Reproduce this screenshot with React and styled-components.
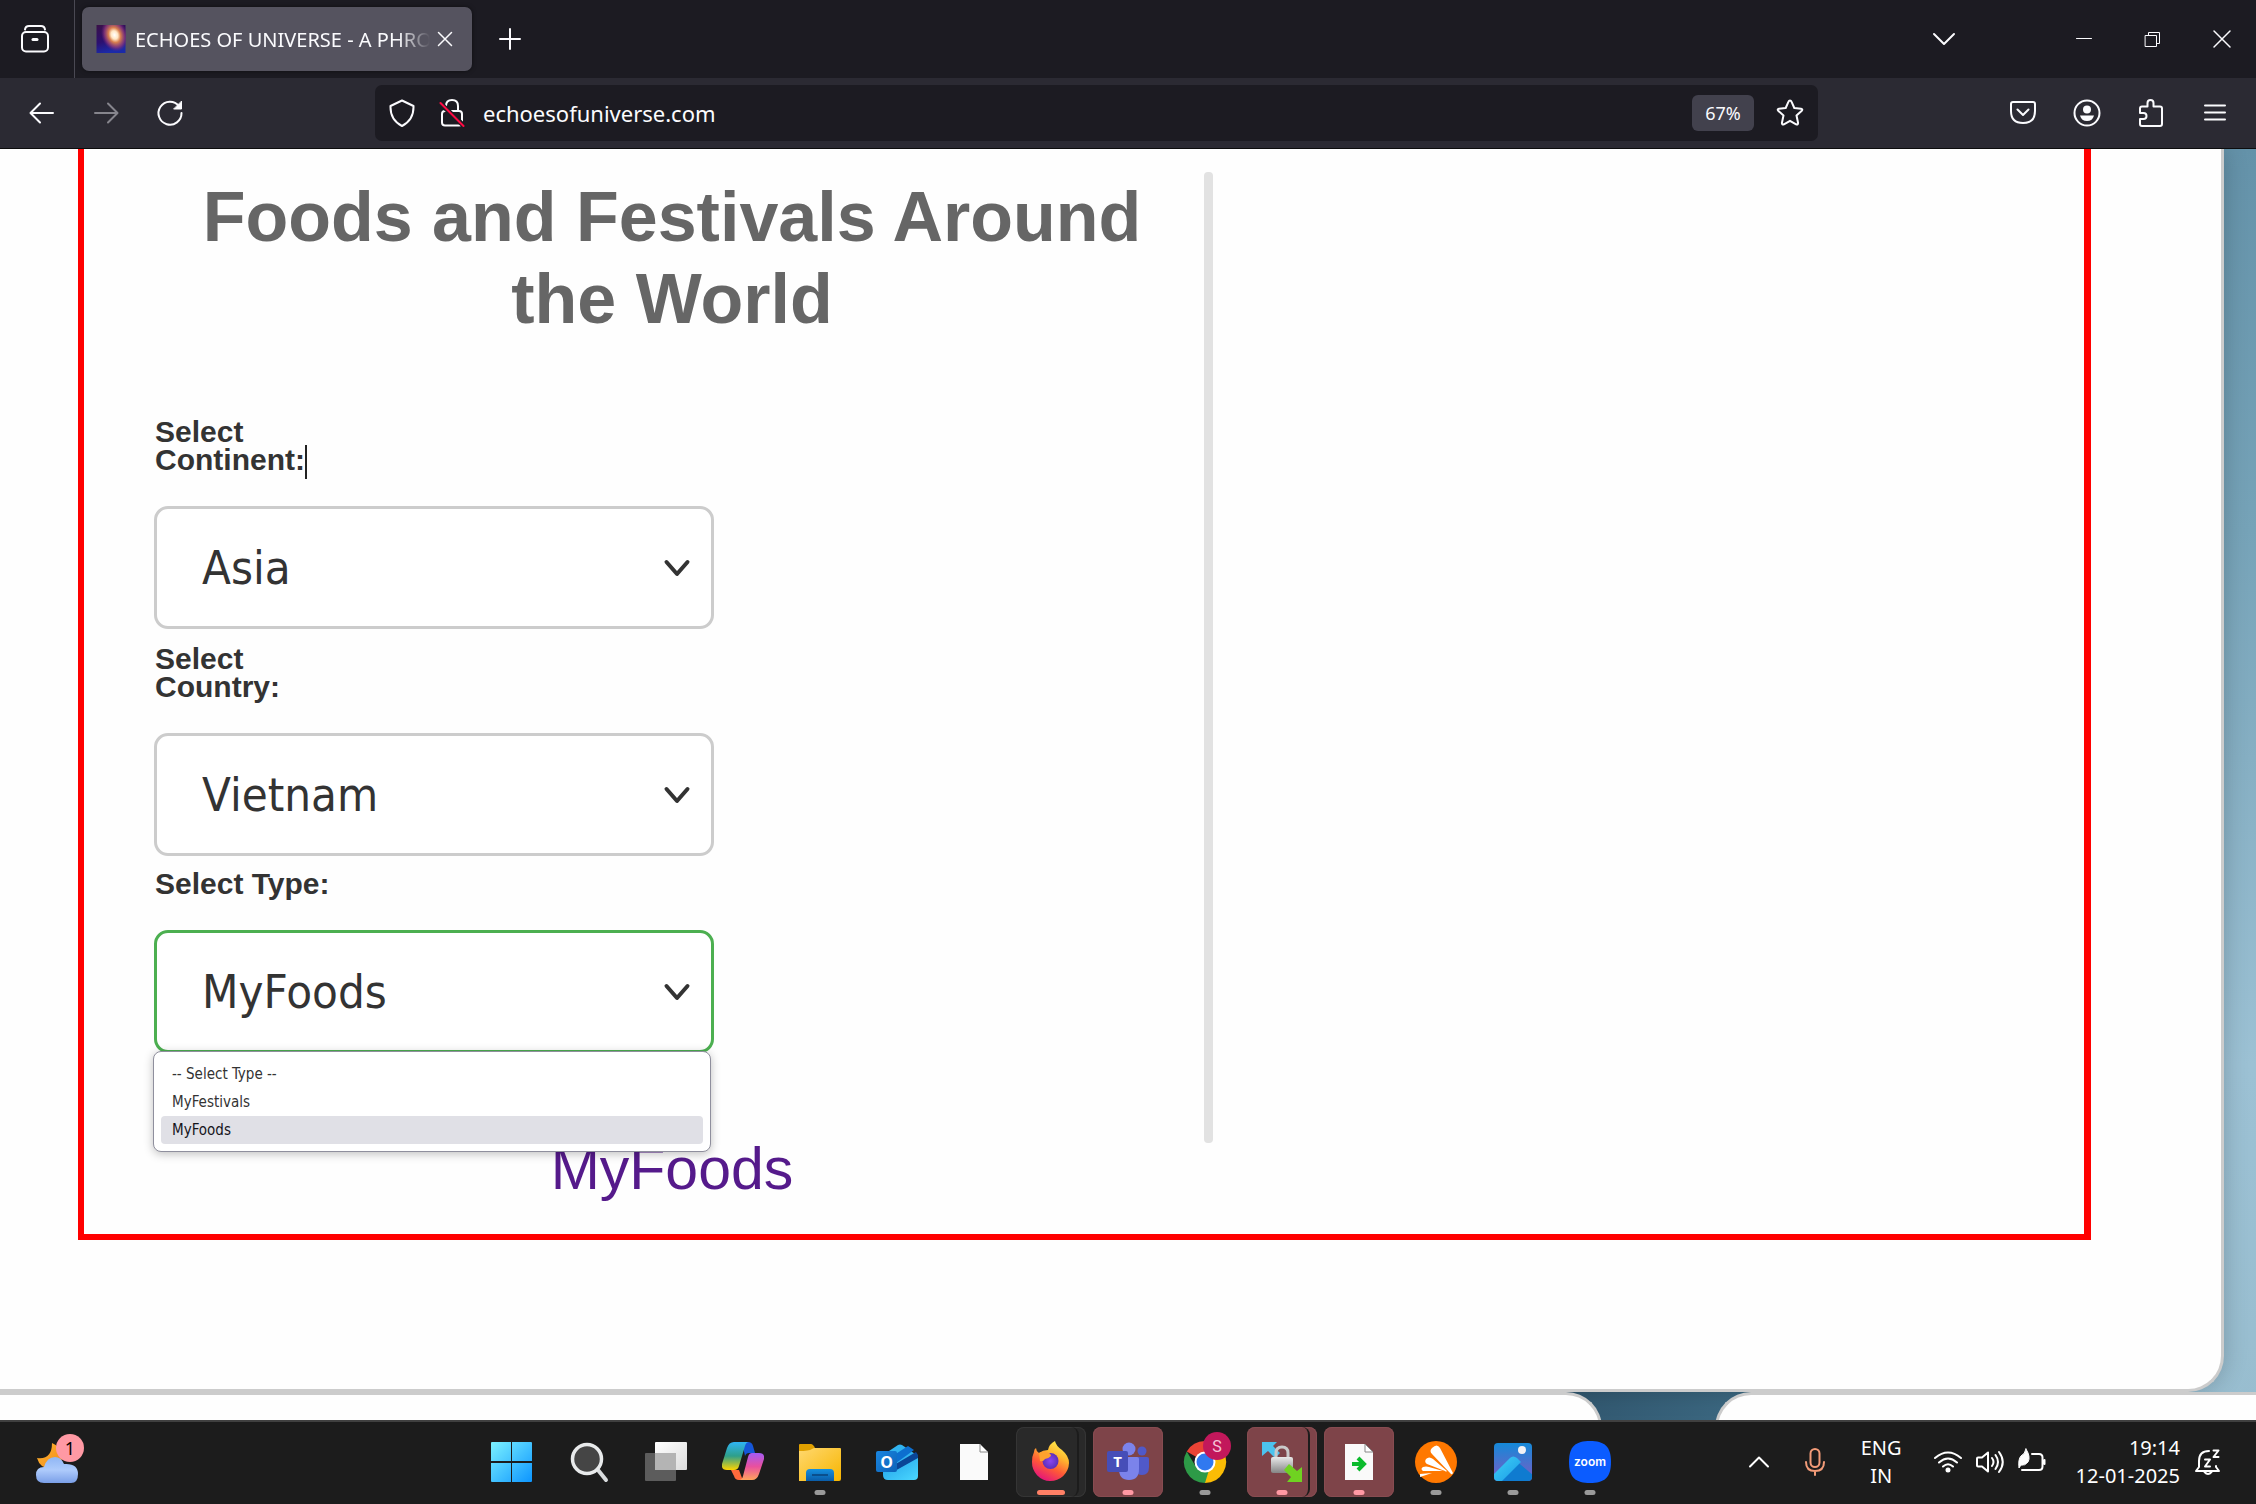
import React, { useState } from "react";
import styled, { createGlobalStyle } from "styled-components";

const uiFont = `"Noto Sans", "Open Sans", sans-serif`;
const formFont = `"DejaVu Sans Condensed", "DejaVu Sans", sans-serif`;
const pageFont = `"Liberation Sans", Arial, sans-serif`;

const Global = createGlobalStyle`
  * { box-sizing: border-box; }
  body { margin: 0; overflow: hidden; background: #1c1c1c; }
  button { font: inherit; color: inherit; background: none; border: 0; padding: 0; }
`;

const Screen = styled.div`
  height: 100vh;
  display: flex;
  flex-direction: column;
  font-family: ${uiFont};
`;

/* ---------- browser chrome ---------- */

const TabStrip = styled.div`
  flex: none;
  display: flex;
  align-items: center;
  height: 78px;
  background: #1c1b22;
  color: #fbfbfe;
`;

const IconButton = styled.button`
  flex: none;
  display: grid;
  place-items: center;
  width: ${(p) => p.$w || 64}px;
  height: 56px;
  color: ${(p) => (p.$dim ? "#86858d" : "#fbfbfe")};
`;

const ViewButton = styled(IconButton)`
  height: 78px;
  border-right: 1px solid #4a4953;
  padding-right: 5px;
`;

const Tab = styled.div`
  display: flex;
  align-items: center;
  width: 390px;
  height: 64px;
  margin: 0 7px;
  padding: 0 12px 0 14px;
  border-radius: 7px;
  background: #55535f;
  box-shadow: 0 0 4px rgba(0, 0, 0, 0.5);
`;

const TabTitle = styled.span`
  flex: 1;
  margin-left: 9px;
  padding-top: 2px;
  font-size: 20px;
  line-height: 28px;
  white-space: nowrap;
  overflow: hidden;
  mask-image: linear-gradient(to right, #000 calc(100% - 32px), transparent);
`;

const Spacer = styled.div`
  flex: 1;
`;

const Toolbar = styled.nav`
  flex: none;
  display: flex;
  align-items: center;
  height: 71px;
  padding: 0 9px 0 10px;
  background: #2b2a33;
  border-bottom: 1px solid #0c0c0d;
`;

const AddressBar = styled.div`
  flex: 1;
  display: flex;
  align-items: center;
  height: 56px;
  margin: 0 173px;
  padding: 0 0 0 2px;
  border-radius: 7px;
  background: #1c1b22;
`;

const AddressInput = styled.input`
  flex: 1;
  min-width: 0;
  border: 0;
  outline: 0;
  padding: 0 0 0 6px;
  background: none;
  color: #fbfbfe;
  font-family: ${uiFont};
  font-size: 22px;
  line-height: 30px;
`;

const ZoomBadge = styled.button`
  width: 62px;
  height: 36px;
  margin-right: 8px;
  border-radius: 6px;
  background: #42414d;
  color: #fbfbfe;
  font-size: 18px;
`;

/* ---------- web page ---------- */

const Page = styled.div`
  flex: 1;
  min-height: 0;
  overflow: hidden;
  display: flex;
  flex-direction: column;
  background:
    linear-gradient(180deg, #6492a9 0%, #76a3b8 30%, #86afc3 48%, #9cc1d4 72%, #98bdcf 100%) right / 72px 100% no-repeat,
    linear-gradient(90deg, #2f546c 68%, #3d6a83 78%);
`;

const MainCard = styled.main`
  flex: none;
  margin-right: 32px;
  padding: 0 130px 149px 78px;
  border: solid #cccccc;
  border-width: 0 3px 3px 0;
  border-radius: 0 0 36px 0;
  background: #fefefe;
  box-shadow: 0 0 24px rgba(0, 0, 0, 0.2);
`;

const Frame = styled.section`
  display: grid;
  grid-template-columns: 56% 9px 1fr;
  align-items: start;
  border: solid #ff0000;
  border-width: 0 7px 6px 6px;
`;

const Panel = styled.div`
  display: flex;
  flex-direction: column;
  padding: 27px 14px 32px 70px;
  font-family: ${pageFont};
`;

const Divider = styled.div`
  height: 971px;
  margin-top: 23px;
  border-radius: 4px;
  background: #e2e2e2;
`;

const Title = styled.h1`
  margin: 0 0 78px;
  color: #666666;
  font-size: 70px;
  line-height: 82px;
  text-align: center;
`;

const Field = styled.div`
  position: relative;
  display: flex;
  flex-direction: column;
  align-items: flex-start;
  width: 560px;
  margin-bottom: ${(p) => p.$after || 16}px;
`;

const Label = styled.label`
  width: 200px;
  margin-bottom: 32px;
  padding-left: 1px;
  color: #333333;
  font-size: 30px;
  font-weight: bold;
  line-height: 28px;
`;

const Caret = styled.span`
  display: inline-block;
  width: 2px;
  height: 34px;
  margin: -6px 0 -6px;
  vertical-align: middle;
  background: #222222;
`;

const SelectBox = styled.div`
  display: grid;
  align-items: center;
  width: 100%;
  color: #333333;

  > * {
    grid-area: 1 / 1;
  }

  > svg {
    justify-self: end;
    margin-right: 23px;
    pointer-events: none;
  }
`;

const Select = styled.select`
  appearance: none;
  width: 100%;
  height: 123px;
  padding: 0 60px 0 45px;
  border: 3px solid ${(p) => (p.$active ? "#4caf50" : "#cccccc")};
  border-radius: 14px;
  outline: 0;
  background: #ffffff;
  color: #333333;
  font-family: ${formFont};
  font-size: 47px;
`;

const Menu = styled.ul`
  position: absolute;
  top: calc(100% - 2px);
  left: -1px;
  width: 558px;
  margin: 0;
  padding: 8px 7px 7px;
  list-style: none;
  border: 1px solid #8f8f9d;
  border-radius: 8px;
  background: #ffffff;
  box-shadow: 0 2px 10px rgba(0, 0, 0, 0.25);
`;

const MenuItem = styled.li`
  padding: 0 11px;
  border-radius: 4px;
  background: ${(p) => (p.$selected ? "#e0e0e6" : "transparent")};
  color: ${(p) => (p.$selected ? "#15141a" : "#333333")};
  font-family: ${formFont};
  font-size: 15px;
  line-height: 28px;
`;

const ResultLink = styled.a`
  align-self: center;
  color: #551a8b;
  font-size: 59px;
  line-height: 66px;
  text-decoration: none;
`;

const NextRow = styled.div`
  flex: 1;
  display: flex;
  gap: 113px;
  overflow: hidden;
`;

const NextCard = styled.div`
  width: ${(p) => p.$w};
  flex: ${(p) => (p.$grow ? 1 : "none")};
  height: 200px;
  border: solid #cccccc;
  border-width: ${(p) => (p.$grow ? "3px 0 0 3px" : "3px 3px 0 0")};
  border-radius: ${(p) => (p.$grow ? "36px 0 0 0" : "0 36px 0 0")};
  background: #fefefe;
`;

/* ---------- taskbar ---------- */

const Taskbar = styled.footer`
  flex: none;
  display: flex;
  align-items: center;
  height: 84px;
  border-top: 2px solid #404040;
  padding-bottom: 2px;
  background: #1c1c1c;
  color: #ffffff;
`;

const Weather = styled.div`
  flex: none;
  width: 477px;
  padding-left: 35px;
`;

const WeatherButton = styled.button`
  position: relative;
  display: block;
  height: 56px;
`;

const Count = styled.span`
  position: absolute;
  top: 0;
  left: 21px;
  width: 28px;
  height: 28px;
  border-radius: 50%;
  background: #ff99a4;
  color: #000000;
  font-size: 18px;
  line-height: 28px;
  text-align: center;
`;

const Apps = styled.div`
  display: flex;
  gap: 7px;
`;

const AppButton = styled.button`
  position: relative;
  display: grid;
  place-items: center;
  width: 70px;
  height: 70px;
  border-radius: 8px;
  background: ${(p) => (p.$tile === "alert" ? "#7e4449" : p.$tile === "open" ? "#292929" : "none")};
  box-shadow: ${(p) =>
    p.$tile === "alert"
      ? "inset 0 0 0 1px #874c51"
      : p.$tile === "open"
      ? "inset 0 0 0 1px #353535"
      : "none"};

  ${(p) =>
    p.$stack &&
    `
    &::before {
      content: "";
      position: absolute;
      inset: 0 7px 0 0;
      border-right: 2px solid #1c1c1c;
      border-radius: 8px;
    }
  `}
`;

const Running = styled.span`
  position: absolute;
  bottom: 2px;
  left: 50%;
  width: ${(p) => p.$w || 11}px;
  height: 5px;
  border-radius: 3px;
  background: ${(p) => p.$color};
  transform: translateX(-50%);
`;

const Tray = styled.div`
  flex: 1;
  display: flex;
  align-items: center;
  justify-content: flex-end;
  padding-right: 34px;
`;

const TrayButton = styled.button`
  display: flex;
  align-items: center;
  gap: 14px;
  margin-left: ${(p) => p.$gap}px;
  font-size: 20px;
  line-height: 28px;
  text-align: ${(p) => p.$align || "center"};
`;

/* ---------- line icons ---------- */

function Line({ size = 28, w = 2, color = "currentColor", children, ...rest }) {
  return (
    <svg
      width={size}
      height={size}
      viewBox="0 0 28 28"
      fill="none"
      stroke={color}
      strokeWidth={w}
      strokeLinecap="round"
      strokeLinejoin="round"
      aria-hidden="true"
      {...rest}
    >
      {children}
    </svg>
  );
}

const Chevron = () => (
  <Line w={4}>
    <path d="M3.500 8 14 20 24.500 8" />
  </Line>
);

const Galaxy = () => (
  <svg width="30" height="28" viewBox="0 0 29 28" aria-hidden="true">
    <defs>
      <linearGradient id="gx" x1="0" y1="0" x2="0.3" y2="1">
        <stop offset="0" stopColor="#3a1148" />
        <stop offset=".6" stopColor="#2c1070" />
        <stop offset="1" stopColor="#1b2aa8" />
      </linearGradient>
      <radialGradient id="gy">
        <stop offset="0" stopColor="#fff" />
        <stop offset=".25" stopColor="#ffe6c4" />
        <stop offset=".45" stopColor="#d9804f" />
        <stop offset=".75" stopColor="#8c3a7a" stopOpacity=".8" />
        <stop offset="1" stopColor="#6b1f7a" stopOpacity="0" />
      </radialGradient>
    </defs>
    <path fill="url(#gx)" d="M0 0h29v28H0z" />
    <ellipse cx="18" cy="10" rx="13" ry="17" fill="url(#gy)" transform="rotate(-20 18 10)" />
  </svg>
);

/* ---------- taskbar icons ---------- */

const Grad = ({ id, a, b, c, h }) => (
  <linearGradient id={id} x1="0" y1="0" x2={h ? 0 : 1} y2="1">
    <stop offset="0" stopColor={a} />
    {c && <stop offset=".5" stopColor={c} />}
    <stop offset="1" stopColor={b} />
  </linearGradient>
);

const Art = ({ children }) => (
  <svg width="42" height="42" viewBox="0 0 42 42" aria-hidden="true">
    {children}
  </svg>
);

const WindowsIcon = () => (
  <Art>
    <defs>
      <linearGradient id="win" gradientUnits="userSpaceOnUse" x1="0" y1="0" x2="42" y2="42">
        <stop offset="0" stopColor="#7df3ff" />
        <stop offset="1" stopColor="#0a93ff" />
      </linearGradient>
    </defs>
    <path fill="url(#win)" d="M1 1h19v19H0V2q0-1 1-1zM21 1h19q1 0 1 1v18H21zM0 22h20v19H1q-1 0-1-1zM21 22h20v18q0 1-1 1H21z" />
  </Art>
);

const SearchIcon = () => (
  <Art>
    <path d="M30 29l8 10" stroke="#d9dcde" strokeWidth="4" strokeLinecap="round" />
    <circle cx="19" cy="18" r="14.500" fill="#454545" stroke="#e8eaeb" strokeWidth="3.500" />
  </Art>
);

const TaskViewIcon = () => (
  <Art>
    <defs>
      <Grad id="tv" a="#fff" b="#dcdcdc" />
    </defs>
    <rect x="10" y="1" width="32" height="28" rx="1" fill="url(#tv)" />
    <rect x="0" y="12" width="31" height="28" rx="1" fill="#5c5c5c" />
    <path fill="#b4b4b4" d="M10 12h21v17H10z" />
  </Art>
);

const CopilotIcon = () => (
  <Art>
    <defs>
      <Grad id="cp1" a="#2fb4f5" c="#2e9f8a" b="#ffd400" h />
      <Grad id="cp2" a="#a45bf5" c="#e9509e" b="#ffa45c" h />
    </defs>
    <path fill="#1556d8" d="M20 1h6q4 0 5 4l2 7h-6q-3 0-4 3z" />
    <path fill="#ff6a3c" d="M9 29h8l3 8q1 2 2 2h-5q-4 0-5-4z" />
    <path fill="url(#cp1)" d="M12 1h15q-3 0-4 4l-6 20q-1 4-5 4H5q-6 0-5-6L5 7q2-6 7-6z" />
    <path fill="url(#cp2)" d="M30 12h7q6 0 5 6l-5 15q-2 6-7 6H17q3 0 4-4l5-19q1-4 4-4z" />
  </Art>
);

const FolderIcon = () => (
  <Art>
    <defs>
      <Grad id="fd" a="#ffd86f" b="#f7b500" />
      <Grad id="fb" a="#1490df" b="#0a5ca8" h />
    </defs>
    <path fill="#e0a000" d="M0 4q0-1 1-1h11q2 0 4 4l1 3H0z" />
    <path fill="url(#fd)" d="M0 10q10 0 13-2l2-1h26q1 0 1 1v30q0 2-2 2H0z" />
    <path fill="url(#fb)" d="M7 40V32q0-4 4-4h20q4 0 4 4v8z" />
    <path stroke="#0a4f8c" strokeWidth="2" d="M13 34h16" />
  </Art>
);

const ArtText = ({ children, ...p }) => (
  <text textAnchor="middle" fill="#fff" fontFamily="Open Sans" fontWeight="700" {...p}>
    {children}
  </text>
);

const OutlookIcon = () => (
  <Art>
    <defs>
      <Grad id="ol" a="#1f9ee8" b="#4bd8ff" />
      <Grad id="ob" a="#1a86e0" b="#0b62b8" />
    </defs>
    <path fill="#31b3ef" d="M7 14 22 4q2-1 4 0l16 11v18H7z" />
    <path fill="#0d6fcf" d="M12 18 32 5l6 4-22 16z" />
    <path fill="#0a4596" d="M18 24 40 11l2 3v5L22 30z" />
    <path fill="url(#ol)" d="M7 30l10 1 25-14v18q0 4-4 4H12q-5 0-5-5z" />
    <rect y="10" width="21" height="21" rx="2" fill="url(#ob)" />
    <ArtText x="10.500" y="26.500" fontSize="16">O</ArtText>
  </Art>
);

const FileIcon = ({ arrow }) => (
  <Art>
    <path fill="#fafafa" d="M7 3h20l8 8v28H7z" />
    <path fill="#fff" stroke="#888" d="M27 3v8h8z" />
    {arrow && (
      <path d="M14 23h12M20 17l6 6-6 6" stroke="#0cbb2d" strokeWidth="4" fill="none" />
    )}
  </Art>
);

const FirefoxIcon = () => (
  <Art>
    <defs>
      <linearGradient id="ff" x1=".8" y1="0" x2=".3" y2="1">
        <stop offset="0" stopColor="#fff44f" />
        <stop offset=".35" stopColor="#ffb52e" />
        <stop offset=".65" stopColor="#ff5a36" />
        <stop offset="1" stopColor="#e3127e" />
      </linearGradient>
      <radialGradient id="fp">
        <stop offset="0" stopColor="#8b45f0" />
        <stop offset="1" stopColor="#5b2fb8" />
      </radialGradient>
    </defs>
    <path fill="url(#ff)" d="M4 11q0-3 2-4 0 3 3 5 4-3 9-3 1-6 7-9 1 5 7 9 7 6 7 13A18.500 18.500 0 1 1 2 21q0-6 2-10z" />
    <circle cx="20.500" cy="20" r="8" fill="url(#fp)" />
    <path fill="#ffa22e" d="M9 12q4-3 10 0 2 1 2 3-3 3-6 3-2 3-5 2z" />
  </Art>
);

const TeamsIcon = () => (
  <Art>
    <circle cx="35" cy="10" r="4.500" fill="#5059c9" />
    <path fill="#5059c9" d="M27 16h13q2 0 2 2v8q0 8-7 8-5 0-8-4z" />
    <circle cx="22" cy="8" r="6.500" fill="#7b83eb" />
    <path fill="#7b83eb" d="M12 16h18q2 0 2 2v10q0 11-10 11T12 28z" />
    <rect x="0" y="10" width="21" height="21" rx="2" fill="#464eb8" />
    <ArtText x="10.500" y="26" fontSize="15">T</ArtText>
  </Art>
);

const ChromeIcon = () => (
  <svg width="52" height="60" viewBox="-4 0 52 60" aria-hidden="true">
    <path fill="#ea4335" d="M22 30 3.800 19.500A21 21 0 0 1 40.200 19.500z" />
    <path fill="#fbbc05" d="M22 30 40.200 19.500A21 21 0 0 1 22 51z" />
    <path fill="#2d9a47" d="M22 51A21 21 0 0 1 3.800 19.500L13 35l13 3z" />
    <circle cx="22" cy="30" r="10.500" fill="#fff" />
    <circle cx="22" cy="30" r="8.500" fill="#3079f0" />
    <circle cx="34" cy="14" r="14" fill="#c2185b" />
    <text x="34" y="20" textAnchor="middle" fill="#f5c6d8" fontFamily="Roboto" fontSize="16">S</text>
  </svg>
);

const LockSyncIcon = () => (
  <Art>
    <defs>
      <Grad id="lk" a="#e9e9e9" b="#858585" h />
    </defs>
    <path fill="#4cc3ee" d="M1 1h15l-4 4 7 7-5 5-7-7-6 5z" />
    <path d="M15 17v-5q0-6 6-6t6 6v5" fill="none" stroke="#c9c9c9" strokeWidth="3" />
    <rect x="10" y="16" width="22" height="16" rx="2" fill="url(#lk)" />
    <path fill="#6fd321" d="M28 23l8 7 5-4v15H26l4-5-7-7z" />
  </Art>
);

const AvastIcon = () => (
  <Art>
    <circle cx="21" cy="21" r="21" fill="#ff7800" />
    <path fill="#fff" d="M17 7q5-5 8 0l13 25q-1 2-2 1L17 13q-3-3 0-6zM11 18q3-3 7 0l14 12q-1 1-2 0L12 23q-3-2-1-5zM8 26q3-1 6 0l14 4H8q-3-2 0-4zM5 33l12-1-12 4z" />
  </Art>
);

const PhotosIcon = () => (
  <Art>
    <defs>
      <Grad id="ph" a="#1489d8" b="#7c5bc4" h />
      <Grad id="pm" a="#3fd0f5" b="#1a9be8" />
      <clipPath id="pc">
        <rect x="2" y="2" width="38" height="38" rx="4" />
      </clipPath>
    </defs>
    <g clipPath="url(#pc)">
      <path fill="url(#ph)" d="M2 2h38v38H2z" />
      <path fill="#0f7bd0" d="M8 40 22 18l20 17v5z" />
      <path fill="url(#pm)" d="M2 33 18 17q3-3 7 0l4 4L10 40H2z" />
    </g>
    <circle cx="30" cy="9" r="4" fill="#f2f2f5" />
  </Art>
);

const ZoomIcon = () => (
  <Art>
    <path fill="#0b5cff" d="M21 0c14 0 21 5 21 21s-7 21-21 21S0 37 0 21 7 0 21 0z" />
    <text x="21" y="25" textAnchor="middle" fill="#fff" fontFamily="Inter" fontWeight="600" fontSize="12">zoom</text>
  </Art>
);

const WeatherIcon = () => (
  <svg width="48" height="56" viewBox="0 0 48 56" aria-hidden="true">
    <defs>
      <Grad id="mn" a="#ffb52e" b="#f28a1c" />
      <Grad id="cl" a="#8fb6f5" b="#7a9fe8" c="#aecbfb" h />
    </defs>
    <path fill="url(#mn)" d="M17 9q10 4 10 14t-10 12q-12 0-15-11 15 2 15-15z" />
    <path fill="url(#cl)" d="M9 49q-8 0-8-8 0-8 8-8 3-10 11-10 6 0 9 7 14-1 14 10 0 9-7 9z" />
  </svg>
);

const apps = [
  { name: "Start", icon: <WindowsIcon /> },
  { name: "Search", icon: <SearchIcon /> },
  { name: "Task View", icon: <TaskViewIcon /> },
  { name: "Copilot", icon: <CopilotIcon /> },
  { name: "File Explorer", icon: <FolderIcon />, run: "#9a9a9a" },
  { name: "Outlook", icon: <OutlookIcon /> },
  { name: "Document", icon: <FileIcon /> },
  { name: "Firefox", icon: <FirefoxIcon />, run: "#ff8066", runWidth: 28, tile: "open", stack: true },
  { name: "Teams", icon: <TeamsIcon />, run: "#ff99a4", tile: "alert" },
  { name: "Chrome", icon: <ChromeIcon />, run: "#9a9a9a" },
  { name: "WinSCP", icon: <LockSyncIcon />, run: "#ff99a4", tile: "alert", stack: true },
  { name: "Transfer", icon: <FileIcon arrow />, run: "#ff99a4", tile: "alert" },
  { name: "Avast", icon: <AvastIcon />, run: "#9a9a9a" },
  { name: "Photos", icon: <PhotosIcon />, run: "#9a9a9a" },
  { name: "Zoom", icon: <ZoomIcon />, run: "#9a9a9a" },
];

const types = ["-- Select Type --", "MyFestivals", "MyFoods"];

function Dropdown({ id, label, options, initial, active, caret, after, children }) {
  const [value, setValue] = useState(initial);
  return (
    <Field $after={after}>
      <Label htmlFor={id}>
        {label}
        {caret && <Caret />}
      </Label>
      <SelectBox>
        <Select id={id} $active={active} value={value} onChange={(e) => setValue(e.target.value)}>
          {options.map((o) => (
            <option key={o}>{o}</option>
          ))}
        </Select>
        <Chevron />
      </SelectBox>
      {children}
    </Field>
  );
}

export default function App() {
  return (
    <Screen>
      <Global />
      <TabStrip>
        <ViewButton $w={75} aria-label="Firefox View">
          <Line>
            <path d="M4 4.500q.5-3.500 4-3.500h12q3.500 0 4 3.500" />
            <rect x="1" y="7" width="26" height="19.500" rx="4" />
            <path d="M12 14.500h4" strokeWidth="3" />
          </Line>
        </ViewButton>
        <Tab>
          <Galaxy />
          <TabTitle>ECHOES OF UNIVERSE - A PHRO</TabTitle>
          <IconButton $w={30} aria-label="Close tab">
            <Line w={1.5}>
              <path d="M7.500 7.500l13 13M20.500 7.500l-13 13" />
            </Line>
          </IconButton>
        </Tab>
        <IconButton $w={62} aria-label="New tab">
          <Line>
            <path d="M14 4v20M4 14h20" />
          </Line>
        </IconButton>
        <Spacer />
        <IconButton $w={70} aria-label="List all tabs">
          <Line>
            <path d="M4 9l10 10L24 9" />
          </Line>
        </IconButton>
        <IconButton $w={70} aria-hidden="true" tabIndex={-1} />
        <IconButton $w={69} aria-label="Minimise">
          <Line w={1}>
            <path d="M6.500 13.500h15" />
          </Line>
        </IconButton>
        <IconButton $w={69} aria-label="Restore">
          <Line w={1} strokeLinejoin="miter">
            <path d="M6.500 10.500h11v11h-11zM9.500 10v-2.500h11v11H18" />
          </Line>
        </IconButton>
        <IconButton $w={69} aria-label="Close">
          <Line w={1.5}>
            <path d="M6 6l16 16M22 6L6 22" />
          </Line>
        </IconButton>
      </TabStrip>

      <Toolbar>
        <IconButton aria-label="Back">
          <Line>
            <path d="M25 14H3M12 4.500L2.500 14l9.500 9.500" />
          </Line>
        </IconButton>
        <IconButton $dim aria-label="Forward">
          <Line>
            <path d="M3 14h22M16 4.500l9.500 9.500-9.500 9.500" />
          </Line>
        </IconButton>
        <IconButton aria-label="Reload">
          <Line>
            <path d="M23 7A11.500 11.500 0 1 0 25.500 14" />
            <path d="M25.500 2.500v7.500H18z" fill="currentColor" strokeWidth="1" />
          </Line>
        </IconButton>
        <AddressBar>
          <IconButton $w={50} aria-label="Tracking protection">
            <Line>
              <path d="M14 1.500 25.500 7q.5 14-11.500 20Q2 21 2.500 7z" />
            </Line>
          </IconButton>
          <IconButton $w={50} aria-label="Connection is not secure">
            <Line>
              <path d="M8 12V7q0-6 6-6t6 6v5" />
              <rect x="4" y="12" width="20" height="14.500" rx="3" />
              <path d="M2 4l23 22" stroke="#1c1b22" strokeWidth="5" />
              <path d="M2.500 4l23 23" stroke="#ff0a43" />
            </Line>
          </IconButton>
          <AddressInput aria-label="Address" defaultValue="echoesofuniverse.com" />
          <ZoomBadge>67%</ZoomBadge>
          <IconButton $w={56} aria-label="Bookmark">
            <Line>
              <path d="M14 1.500q1 0 1.500 1.200l2.800 6.300 6.700.7q2 .5.800 2L20.500 16.500l1.600 7.500q0 2-2 1.300L14 21.800l-6.100 3.500q-2 .7-2-1.300l1.600-7.500-5.300-4.800q-1.200-1.500.8-2l6.700-.7 2.800-6.300Q13 1.500 14 1.500z" />
            </Line>
          </IconButton>
        </AddressBar>
        <IconButton aria-label="Save to Pocket">
          <Line>
            <path d="M4 3h20q2 0 2 2v7q0 12-12 12T2 12V5q0-2 2-2zM8.500 10.500l5.500 5.500 5.500-5.500" />
          </Line>
        </IconButton>
        <IconButton aria-label="Account">
          <Line>
            <circle cx="14" cy="14" r="12.500" />
            <circle cx="14" cy="10.500" r="4" fill="currentColor" stroke="none" />
            <path d="M7 16.500h14q-1.500 5.500-7 5.500t-7-5.500z" fill="currentColor" stroke="none" />
          </Line>
        </IconButton>
        <IconButton aria-label="Extensions">
          <Line>
            <path d="M10.500 7.500V4q0-3 3-3t3 3v3.500H23q2 0 2 2v15.500q0 2-2 2H5q-2 0-2-2v-5h3.500q3 0 3-3t-3-3H3V9.500q0-2 2-2z" />
          </Line>
        </IconButton>
        <IconButton aria-label="Menu">
          <Line>
            <path d="M4 6.500h20M4 13.500h20M4 20.500h20" />
          </Line>
        </IconButton>
      </Toolbar>

      <Page>
        <MainCard>
          <Frame>
            <Panel>
              <Title>Foods and Festivals Around the World</Title>
              <Dropdown id="continent" label="Select Continent:" options={["Asia"]} initial="Asia" caret />
              <Dropdown id="country" label="Select Country:" options={["Vietnam"]} initial="Vietnam" after={14} />
              <Dropdown id="type" label="Select Type:" options={types} initial="MyFoods" active after={83}>
                <Menu role="listbox" aria-label="Select Type">
                  {types.map((t) => (
                    <MenuItem key={t} role="option" aria-selected={t === "MyFoods"} $selected={t === "MyFoods"}>
                      {t}
                    </MenuItem>
                  ))}
                </Menu>
              </Dropdown>
              <ResultLink href="#myfoods">MyFoods</ResultLink>
            </Panel>
            <Divider />
          </Frame>
        </MainCard>
        <NextRow>
          <NextCard $w="71%" />
          <NextCard $grow />
        </NextRow>
      </Page>

      <Taskbar>
        <Weather>
          <WeatherButton aria-label="Weather">
            <WeatherIcon />
            <Count>1</Count>
          </WeatherButton>
        </Weather>
        <Apps>
          {apps.map((a) => (
            <AppButton key={a.name} aria-label={a.name} $tile={a.tile} $stack={a.stack}>
              {a.icon}
              {a.run && <Running $color={a.run} $w={a.runWidth} />}
            </AppButton>
          ))}
        </Apps>
        <Tray>
          <TrayButton $gap={0} aria-label="Show hidden icons">
            <Line>
              <path d="M5 18.500l9-9 9 9" />
            </Line>
          </TrayButton>
          <TrayButton $gap={28} aria-label="Microphone in use">
            <Line color="#f29b78">
              <rect x="9.500" y="1" width="9" height="18" rx="4.500" />
              <path d="M5 14q0 9 9 9t9-9M14 23v4" />
            </Line>
          </TrayButton>
          <TrayButton $gap={32}>
            ENG
            <br />
            IN
          </TrayButton>
          <TrayButton $gap={32} aria-label="Network, volume and battery">
            <Line>
              <path d="M1 10q13-11 26 0M5 14.500q9-8 18 0M9 18.500q5-4.500 10 0" />
              <circle cx="14" cy="22" r="1.500" fill="currentColor" />
            </Line>
            <Line>
              <path d="M1 10.500q0-1 1-1h4l6-5v19l-6-5H2q-1 0-1-1zM16 10q3 4 0 8M19.500 7q5 7 0 14M23 4q7.500 10 0 20" />
            </Line>
            <Line>
              <path d="M14 6h7q3.500 0 3.500 3.500v9q0 3.500-3.500 3.500H4M26.500 12v4" />
              <path d="M8 1q5 8 2 13-3 4-7 3l-2 3q-1-9 2-12 4-2 5-7z" fill="currentColor" strokeWidth="1" />
            </Line>
          </TrayButton>
          <TrayButton $gap={30} $align="right">
            <span>
              19:14
              <br />
              12-01-2025
            </span>
            <Line>
              <path d="M15 3Q5 3 5 13v6l-3 4h23l-3-4v-1M10.500 24q3.500 4 7 0M11 11.500h5l-5 7h5M19.500 2.500h5l-5 6.500h5" />
            </Line>
          </TrayButton>
        </Tray>
      </Taskbar>
    </Screen>
  );
}
